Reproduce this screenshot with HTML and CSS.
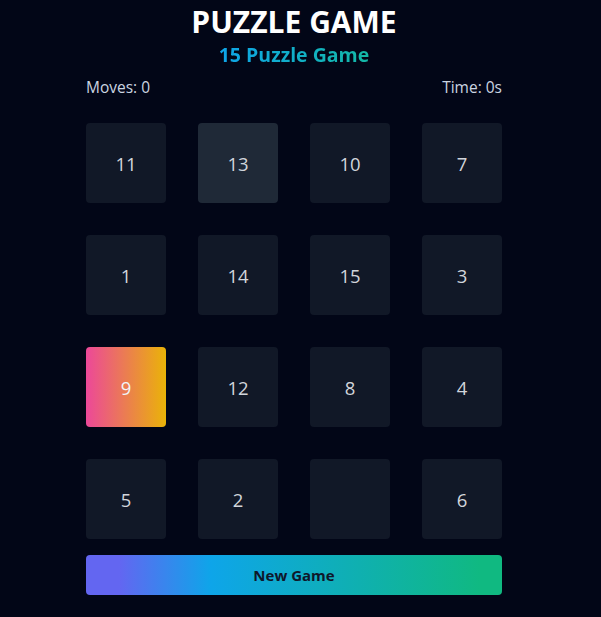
FILE: index.html
```html
<!DOCTYPE html>
<html lang="en">
<head>
<meta charset="utf-8">
<title>Puzzle Game</title>
<link rel="stylesheet" href="styles.css">
</head>
<body>
<main class="app">
  <h1 class="title">PUZZLE GAME</h1>
  <h2 class="subtitle">15 Puzzle Game</h2>
  <div class="stats">
    <span>Moves: 0</span>
    <span>Time: 0s</span>
  </div>
  <div class="board">
    <div class="tile">11</div>
    <div class="tile tile-hover">13</div>
    <div class="tile">10</div>
    <div class="tile">7</div>
    <div class="tile">1</div>
    <div class="tile">14</div>
    <div class="tile">15</div>
    <div class="tile">3</div>
    <div class="tile tile-active">9</div>
    <div class="tile">12</div>
    <div class="tile">8</div>
    <div class="tile">4</div>
    <div class="tile">5</div>
    <div class="tile">2</div>
    <div class="tile tile-empty"></div>
    <div class="tile">6</div>
  </div>
  <button class="new-game">New Game</button>
</main>
</body>
</html>
```

FILE: styles.css
```css
html, body {
  margin: 0;
  padding: 0;
  background: #020617;
  height: 100%;
}
body {
  font-family: "Open Sans", "Noto Sans", sans-serif;
  color: #cbd5e1;
  padding-right: 13px;
  box-sizing: border-box;
}
.app {
  width: 416px;
  margin: 0 auto;
  padding-top: 3px;
  display: flex;
  flex-direction: column;
  align-items: stretch;
}
.title {
  margin: 0;
  text-align: center;
  font-size: 30px;
  line-height: 38px;
  font-weight: 700;
  color: #ffffff;
}
.subtitle {
  margin: 0;
  text-align: center;
  font-size: 19.5px;
  line-height: 27px;
  font-weight: 700;
  align-self: center;
  background: linear-gradient(90deg, #0ea5e9, #14b8a6);
  -webkit-background-clip: text;
  background-clip: text;
  color: transparent;
}
.stats {
  display: flex;
  justify-content: space-between;
  font-size: 15.5px;
  line-height: 20px;
  margin-top: 9px;
  color: #cbd5e1;
}
.board {
  margin-top: 26px;
  display: grid;
  grid-template-columns: repeat(4, 80px);
  grid-auto-rows: 80px;
  gap: 32px;
}
.tile {
  background: #111827;
  border-radius: 4px;
  display: flex;
  align-items: center;
  justify-content: center;
  font-size: 18.5px;
  color: #d1d5db;
}
.tile-hover {
  background: #1f2937;
}
.tile-active {
  background: linear-gradient(90deg, #ec4899, #eab308);
  color: #f1f5f9;
}
.tile-empty {
  background: #111827;
}
.new-game {
  margin-top: 16px;
  height: 40px;
  border: 0;
  border-radius: 4px;
  background: linear-gradient(90deg, #6366f1 8%, #0ea5e9 30%, #10b981 95%);
  font-family: inherit;
  font-size: 15px;
  font-weight: 700;
  color: #0f172a;
  cursor: pointer;
}
```
